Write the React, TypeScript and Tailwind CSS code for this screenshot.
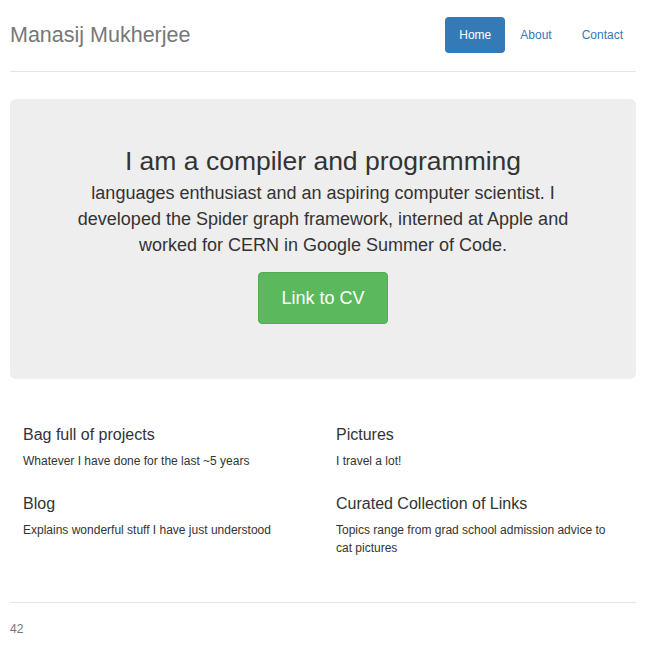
export default function App() {
  const items = [
    { title: "Bag full of projects", text: "Whatever I have done for the last ~5 years" },
    { title: "Pictures", text: "I travel a lot!" },
    { title: "Blog", text: "Explains wonderful stuff I have just understood" },
    {
      title: "Curated Collection of Links",
      text: "Topics range from grad school admission advice to cat pictures",
    },
  ];

  return (
    <div className="min-h-screen bg-white px-[10px] font-['Liberation_Sans',Arial,sans-serif] text-[#333]">
      <header className="flex items-center justify-between border-b border-[#e5e5e5] pt-[17px] pb-[18px]">
        <h3 className="text-[21.5px] leading-[36px] text-[#777]">Manasij Mukherjee</h3>
        <nav className="flex text-[12px] leading-[36px]">
          <a href="#" className="rounded-[4px] bg-[#337ab7] px-[14px] text-white">
            Home
          </a>
          <a href="#" className="px-[15px] text-[#337ab7]">
            About
          </a>
          <a href="#" className="pr-[13px] pl-[15px] text-[#337ab7]">
            Contact
          </a>
        </nav>
      </header>

      <section className="mt-[27px] h-[280px] rounded-[6px] bg-[#eee] px-[60px] pt-[47px] text-center">
        <h1 className="text-[26.5px] leading-[31px]">I am a compiler and programming</h1>
        <p className="mt-[3px] text-[18px] leading-[26px]">
          languages enthusiast and an aspiring computer scientist. I developed the Spider graph
          framework, interned at Apple and worked for CERN in Google Summer of Code.
        </p>
        <a
          href="#"
          className="mt-[14px] inline-flex h-[52px] w-[130px] items-center justify-center rounded-[4px] border border-[#4cae4c] bg-[#5cb85c] text-[18px] text-white"
        >
          Link to CV
        </a>
      </section>

      <section className="mt-[47px] grid grid-cols-2 gap-y-[25px]">
        {items.map((it) => (
          <div key={it.title} className="px-[13px]">
            <h4 className="text-[16px] leading-[18px]">{it.title}</h4>
            <p className="mt-[8px] text-[12px] leading-[18px]">{it.text}</p>
          </div>
        ))}
      </section>

      <footer className="mt-[45px] border-t border-[#e5e5e5] pt-[17px] text-[12px] leading-[18px] text-[#777]">
        42
      </footer>
    </div>
  );
}
